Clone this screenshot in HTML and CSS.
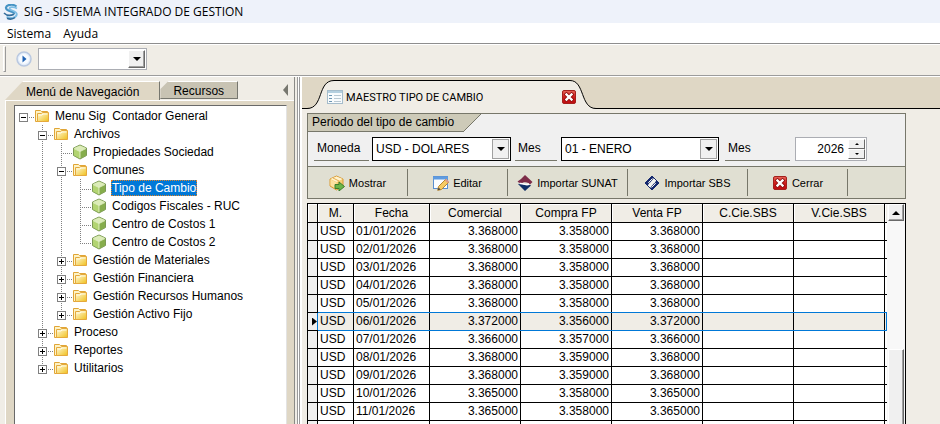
FILE: index.html
```html
<!DOCTYPE html>
<html lang="es">
<head>
    <meta charset="UTF-8">
    <meta name="viewport" content="width=device-width, initial-scale=1.0">
    <link rel="stylesheet" href="styles.css">
    <title>SIG - SISTEMA INTEGRADO DE GESTION</title>
</head>
<body>
    <!-- Shared icons -->
    <svg class="sprite" aria-hidden="true">
        <defs>
            <linearGradient id="gold" x1="0" y1="0" x2="1" y2="1">
                <stop offset="0" stop-color="#fffbe0"/>
                <stop offset="1" stop-color="#f0c01c"/>
            </linearGradient>
            <linearGradient id="red" x1="0" y1="0" x2="0" y2="1">
                <stop offset="0" stop-color="#e8685c"/>
                <stop offset="0.5" stop-color="#cf1f1c"/>
                <stop offset="1" stop-color="#c00c10"/>
            </linearGradient>
        </defs>
        <symbol id="folder" viewBox="0 0 16 16">
            <path d="M1.5 2.500h5l1 1h6v10h-12z" fill="#fdf3c6" stroke="#e0a536"/>
            <path d="M3.500 5.500h4l1-1h6v9h-11z" fill="url(#gold)" stroke="#e5a93c"/>
            <path d="M4.500 7h3.500l1-1h4.500" fill="none" stroke="#fffbe6"/>
        </symbol>
        <symbol id="cube" viewBox="0 0 16 16">
            <path d="M8 1l6.500 3v7.500L8 15l-6.500-3.500V4z" fill="#93bc55" stroke="#7c9a55"/>
            <path d="M8 1.500L14 4 8 7.500 2 4z" fill="#dcecb8"/>
            <path d="M2 4.500l6 3v7l-6-3.200z" fill="#b2d471"/>
            <path d="M14 4.500l-6 3v7l6-3.200z" fill="#86ad4c"/>
            <path d="M2 4.500l6 3 6-3M8 7.500V14" fill="none" stroke="#eef6d8" stroke-width="0.8"/>
        </symbol>
        <symbol id="close" viewBox="0 0 16 16">
            <rect x="1.500" y="1.500" width="13" height="13" rx="1.500" fill="url(#red)" stroke="#a3201c"/>
            <path d="M5.500 5.500l5 5M10.500 5.500l-5 5" stroke="#8d0c0c" stroke-width="4" stroke-linecap="square"/>
            <path d="M5.500 5.500l5 5M10.500 5.500l-5 5" stroke="#fff" stroke-width="2.400" stroke-linecap="square"/>
        </symbol>
    </svg>

    <header class="titlebar">
        <svg class="logo" viewBox="0 0 16 16">
            <path d="M13.500 2.500C10-.3 3.500.5 3 3.500c-.4 2.600 2.500 3.300 5 4 2 .6 3.500 1.300 3 2.500" fill="none" stroke="#4693c4" stroke-width="2.200"/>
            <path d="M14 4.500C10.500 2.500 6.500 3 6.500 4.800c.2 1.800 7.800 2 7.300 5.700C13.200 14 7 15 3.500 12.800" fill="none" stroke="#7dbde4" stroke-width="1.800"/>
            <path d="M1 9c2.500 2.500 6 3.200 10 1.200M4 14.300c3 1.200 6 .8 8-.8" fill="none" stroke="#336d9b" stroke-width="1.600"/>
        </svg>
        <span>SIG - SISTEMA INTEGRADO DE GESTION</span>
    </header>

    <nav class="menubar">
        <a href="#">Sistema</a>
        <a href="#">Ayuda</a>
    </nav>

    <div class="toolbar">
        <span class="grip"></span>
        <button type="button" class="go" aria-label="Ejecutar">
            <svg viewBox="0 0 16 16">
                <circle cx="8" cy="8" r="7" fill="#e4eefa" stroke="#b9c8e0" stroke-width="1.500"/>
                <circle cx="8" cy="8" r="5" fill="#f8fbff"/>
                <path d="M6.500 4.500L10.500 8l-4 3.500z" fill="#1f62b4"/>
            </svg>
        </button>
        <div class="combo quick">
            <select aria-label="Comando"><option></option></select>
            <span class="drop"></span>
        </div>
    </div>

    <div class="workspace">
        <aside class="sidebar">
            <div class="side-tabs">
                <button type="button" class="side-tab active"><span>Menú de Navegación</span></button>
                <button type="button" class="side-tab"><span>Recursos</span></button>
                <button type="button" class="collapse" aria-label="Ocultar panel"></button>
            </div>
            <div class="side-panel">
                <ul class="tree">
                    <li>
                        <div class="node"><button type="button" class="toggle open" aria-label="Contraer"></button><svg><use href="#folder"/></svg><a href="#">Menu Sig&nbsp; Contador General</a></div>
                        <ul>
                            <li>
                                <div class="node"><button type="button" class="toggle open" aria-label="Contraer"></button><svg><use href="#folder"/></svg><a href="#">Archivos</a></div>
                                <ul>
                                    <li><div class="node leaf"><svg><use href="#cube"/></svg><a href="#">Propiedades Sociedad</a></div></li>
                                    <li>
                                        <div class="node"><button type="button" class="toggle open" aria-label="Contraer"></button><svg><use href="#folder"/></svg><a href="#">Comunes</a></div>
                                        <ul>
                                            <li><div class="node leaf"><svg><use href="#cube"/></svg><a href="#" class="selected">Tipo de Cambio</a></div></li>
                                            <li><div class="node leaf"><svg><use href="#cube"/></svg><a href="#">Codigos Fiscales - RUC</a></div></li>
                                            <li><div class="node leaf"><svg><use href="#cube"/></svg><a href="#">Centro de Costos 1</a></div></li>
                                            <li><div class="node leaf"><svg><use href="#cube"/></svg><a href="#">Centro de Costos 2</a></div></li>
                                        </ul>
                                    </li>
                                    <li><div class="node"><button type="button" class="toggle" aria-label="Expandir"></button><svg><use href="#folder"/></svg><a href="#">Gestión de Materiales</a></div></li>
                                    <li><div class="node"><button type="button" class="toggle" aria-label="Expandir"></button><svg><use href="#folder"/></svg><a href="#">Gestión Financiera</a></div></li>
                                    <li><div class="node"><button type="button" class="toggle" aria-label="Expandir"></button><svg><use href="#folder"/></svg><a href="#">Gestión Recursos Humanos</a></div></li>
                                    <li><div class="node"><button type="button" class="toggle" aria-label="Expandir"></button><svg><use href="#folder"/></svg><a href="#">Gestión Activo Fijo</a></div></li>
                                </ul>
                            </li>
                            <li><div class="node"><button type="button" class="toggle" aria-label="Expandir"></button><svg><use href="#folder"/></svg><a href="#">Proceso</a></div></li>
                            <li><div class="node"><button type="button" class="toggle" aria-label="Expandir"></button><svg><use href="#folder"/></svg><a href="#">Reportes</a></div></li>
                            <li><div class="node"><button type="button" class="toggle" aria-label="Expandir"></button><svg><use href="#folder"/></svg><a href="#">Utilitarios</a></div></li>
                        </ul>
                    </li>
                </ul>
            </div>
        </aside>

        <div class="splitter"></div>

        <main class="document">
            <div class="doc-tabs">
                <svg class="edge" viewBox="0 0 32 29">
                    <path d="M0 28.500h5C22 28.500 15 .5 32 .5V29H0z" fill="#f0ede6"/>
                    <path d="M0 28.500h5C22 28.500 15 .5 32 .5" fill="none" stroke="#000"/>
                </svg>
                <div class="doc-tab">
                    <svg class="form-icon" viewBox="0 0 16 14">
                        <rect x="0.500" y="0.500" width="15" height="13" fill="#f8fbfd" stroke="#a5bccb"/>
                        <path d="M1 2h14" stroke="#b4cfdf" stroke-width="2"/>
                        <path d="M2 5.500h3M2 8.500h3M2 11.500h3" stroke="#6d96b3"/>
                        <path d="M7 5.500h7M7 8.500h7M7 11.500h7" stroke="#b9c8d2"/>
                    </svg>
                    <span>MAESTRO TIPO DE CAMBIO</span>
                    <button type="button" class="close" aria-label="Cerrar pestaña"><svg><use href="#close"/></svg></button>
                </div>
                <svg class="edge right" viewBox="0 0 26 29">
                    <path d="M0 .5C15 .5 10 28.500 26 28.500V29H0z" fill="#f0ede6"/>
                    <path d="M0 .5C15 .5 10 28.500 26 28.500" fill="none" stroke="#000"/>
                </svg>
            </div>

            <div class="doc-body">
                <form class="filter">
                    <h1>
                        <span>Periodo del tipo de cambio</span>
                        <svg viewBox="0 0 18 18">
                            <path d="M0 0h18L0 18z" fill="#cdcab8"/>
                            <path d="M18 0L0 18" stroke="#77776a"/>
                        </svg>
                    </h1>
                    <div class="fields">
                        <label class="moneda" for="moneda">Moneda</label>
                        <div class="combo currency">
                            <select id="moneda"><option>USD - DOLARES</option></select>
                            <span class="drop"></span>
                        </div>
                        <label class="mes" for="mes">Mes</label>
                        <div class="combo month">
                            <select id="mes"><option>01 - ENERO</option></select>
                            <span class="drop"></span>
                        </div>
                        <label class="anio" for="anio">Mes</label>
                        <div class="spinner">
                            <input type="number" id="anio" value="2026">
                            <div class="steps">
                                <button type="button" class="up" aria-label="Subir"></button>
                                <button type="button" class="down" aria-label="Bajar"></button>
                            </div>
                        </div>
                    </div>
                    <div class="actions">
                        <button type="button">
                            <svg viewBox="0 0 16 16">
                                <path d="M7.500 1l6.500 3v7l-6.500 4L1 11V4z" fill="#f5ce74" stroke="#d99a35"/>
                                <path d="M7.500 1.500L13.500 4l-6 3L1.500 4z" fill="#fff3cf"/>
                                <path d="M1.500 4.500l6 3v6.500l-6-3.500z" fill="#fbe1a0"/>
                                <path d="M4 3l6 3v3" fill="none" stroke="#e5ac4c"/>
                                <path d="M6 9.500h4V7l5.500 4.500L10 16v-2.500H6z" fill="#6cb548" stroke="#3c7f2b"/>
                            </svg>
                            <span>Mostrar</span>
                        </button>
                        <button type="button">
                            <svg viewBox="0 0 16 16">
                                <rect x="0.500" y="1.500" width="14" height="12" fill="#fcfdff" stroke="#5a8fd0"/>
                                <path d="M0 3h15" stroke="#5f9be0" stroke-width="3"/>
                                <path d="M5.500 11.500l7-7 3 3-7 7-3.800.8z" fill="#f7cb63" stroke="#b9862f"/>
                                <path d="M12.500 4.500l3 3" stroke="#e09a86" stroke-width="2"/>
                                <path d="M4.700 15.300l1-2.700 1.800 1.800z" fill="#444"/>
                            </svg>
                            <span>Editar</span>
                        </button>
                        <button type="button" class="wide">
                            <svg viewBox="0 0 16 16">
                                <path d="M8 0l7.500 7-2.500 2.500C12 7 6.500 6 3.500 9L.5 6.500 4 4z" fill="#7d2c48"/>
                                <path d="M8 16l6-5.500c-2-1.500-3 .5-6-.5-2-.7-3-2-7-1z" fill="#0f2f66"/>
                                <path d="M2.500 8.500c5-.5 5 2.500 9.500.5" fill="none" stroke="#fff" stroke-width="1.500"/>
                            </svg>
                            <span>Importar SUNAT</span>
                        </button>
                        <button type="button" class="wide">
                            <svg viewBox="0 0 16 16">
                                <path d="M8 1L15 8l-7 7-7-7z" fill="#f4f4f0" stroke="#15296e"/>
                                <path d="M8 1L1 8l2.500 2.500L10 3z" fill="#15296e"/>
                                <path d="M8 15l7-7-2.500-2.500L6 13z" fill="#15296e"/>
                                <path d="M8.500 3.500L4.500 7.500 7 9.500M7.500 12.500l4-4L9 6.500" fill="none" stroke="#f4f4f0"/>
                            </svg>
                            <span>Importar SBS</span>
                        </button>
                        <button type="button">
                            <svg><use href="#close"/></svg>
                            <span>Cerrar</span>
                        </button>
                    </div>
                </form>

                <div class="grid">
                    <table>
                        <colgroup>
                            <col class="c-mark"><col class="c-m"><col class="c-fecha">
                            <col class="c-num"><col class="c-num"><col class="c-num"><col class="c-num"><col class="c-num"><col>
                        </colgroup>
                        <thead>
                            <tr><th></th><th>M.</th><th>Fecha</th><th>Comercial</th><th>Compra FP</th><th>Venta FP</th><th>C.Cie.SBS</th><th>V.Cie.SBS</th><th></th></tr>
                        </thead>
                        <tbody>
                            <tr><td></td><td>USD</td><td>01/01/2026</td><td>3.368000</td><td>3.358000</td><td>3.368000</td><td></td><td></td><td></td></tr>
                            <tr><td></td><td>USD</td><td>02/01/2026</td><td>3.368000</td><td>3.358000</td><td>3.368000</td><td></td><td></td><td></td></tr>
                            <tr><td></td><td>USD</td><td>03/01/2026</td><td>3.368000</td><td>3.358000</td><td>3.368000</td><td></td><td></td><td></td></tr>
                            <tr><td></td><td>USD</td><td>04/01/2026</td><td>3.368000</td><td>3.358000</td><td>3.368000</td><td></td><td></td><td></td></tr>
                            <tr class="before-current"><td></td><td>USD</td><td>05/01/2026</td><td>3.368000</td><td>3.358000</td><td>3.368000</td><td></td><td></td><td></td></tr>
                            <tr class="current"><td><span class="marker"></span></td><td>USD</td><td>06/01/2026</td><td>3.372000</td><td>3.356000</td><td>3.372000</td><td></td><td></td><td></td></tr>
                            <tr><td></td><td>USD</td><td>07/01/2026</td><td>3.366000</td><td>3.357000</td><td>3.366000</td><td></td><td></td><td></td></tr>
                            <tr><td></td><td>USD</td><td>08/01/2026</td><td>3.368000</td><td>3.359000</td><td>3.368000</td><td></td><td></td><td></td></tr>
                            <tr><td></td><td>USD</td><td>09/01/2026</td><td>3.368000</td><td>3.359000</td><td>3.368000</td><td></td><td></td><td></td></tr>
                            <tr><td></td><td>USD</td><td>10/01/2026</td><td>3.365000</td><td>3.358000</td><td>3.365000</td><td></td><td></td><td></td></tr>
                            <tr><td></td><td>USD</td><td>11/01/2026</td><td>3.365000</td><td>3.358000</td><td>3.365000</td><td></td><td></td><td></td></tr>
                            <tr><td></td><td></td><td></td><td></td><td></td><td></td><td></td><td></td><td></td></tr>
                        </tbody>
                    </table>
                    <div class="scrollbar">
                        <button type="button" class="scroll-up" aria-label="Desplazar arriba"></button>
                        <div class="thumb"></div>
                    </div>
                </div>
            </div>
        </main>
    </div>
</body>
</html>
```
FILE: styles.css
```css
* {
    box-sizing: border-box;
}

body {
    margin: 0;
    height: 100vh;
    overflow: hidden;
    display: flex;
    flex-direction: column;
    background: #f0ede6;
    color: #000;
    font-family: "Liberation Sans", Arial, sans-serif;
    font-size: 12px;
}

button,
select,
input {
    font: inherit;
    color: inherit;
    margin: 0;
    padding: 0;
    border: 0;
    border-radius: 0;
    background: none;
}

a {
    color: inherit;
    text-decoration: none;
}

svg {
    display: block;
    flex: none;
    width: 16px;
    height: 16px;
}

.sprite {
    position: absolute;
    width: 0;
    height: 0;
}

/* Title, menu and toolbar */
.titlebar {
    flex: none;
    height: 23px;
    display: flex;
    align-items: center;
    gap: 5px;
    padding-left: 3px;
    background: #eef2fa;
    font-family: "Open Sans", "Noto Sans", sans-serif;
}

.menubar {
    flex: none;
    height: 21px;
    display: flex;
    align-items: center;
    gap: 12px;
    padding-left: 7px;
    background: #fff;
    border-bottom: 1px solid #8e8e8e;
    font-family: "Open Sans", "Noto Sans", sans-serif;
}

.toolbar {
    flex: none;
    height: 32px;
    display: flex;
    align-items: center;
    padding: 0 3px 3px;
    border-top: 1px solid #fff;
    border-bottom: 1px solid #9c9c9c;
}

.grip {
    width: 3px;
    height: 26px;
    border: 1px solid #fff;
    border-right-color: #9a9a9a;
    border-bottom-color: #9a9a9a;
}

.go {
    margin: 0 6px 0 10px;
}

/* Drop-down boxes */
.combo {
    display: flex;
    height: 24px;
    background: #fff;
    border: 1px solid #000;
}

.combo select {
    flex: 1;
    min-width: 0;
    padding-left: 3px;
    appearance: none;
    outline: none;
}

.drop {
    width: 17px;
    margin: 1px;
    display: flex;
    align-items: center;
    justify-content: center;
    background: #f0f0f0;
    border: 1px solid #a0a0a0;
}

.drop::after {
    content: "";
    border: 4px solid transparent;
    border-top-color: #000;
    border-bottom: 0;
}

.quick {
    width: 109px;
    height: 22px;
    border-color: #abadb3;
}

.quick .drop {
    border-color: #fff #696969 #696969 #fff;
    box-shadow: inset -1px -1px #a0a0a0;
}

.workspace {
    flex: 1;
    min-height: 0;
    display: flex;
    border-top: 1px solid #fff;
}

/* Navigation panel */
.sidebar {
    flex: none;
    width: 295px;
    display: flex;
    flex-direction: column;
    padding-top: 4px;
    border-right: 1px solid #8a8a86;
}

.side-tabs {
    display: flex;
    height: 19px;
    padding-left: 5px;
}

.side-tab {
    height: 18px;
    padding: 2px 13px 0 13px;
    background: #c8c3b3;
    clip-path: polygon(8px 0, 100% 0, 100% 100%, 0 100%, 0 8px);
    border-top: 1px solid #fff;
    border-right: 1px solid #77776f;
    border-bottom: 1px solid #77776f;
}

.side-tab.active {
    height: 19px;
    padding: 1px 20px 0 21px;
    background: #dfd7c5;
    clip-path: polygon(18px 0, 100% 0, 100% 100%, 0 100%);
    border-bottom: 0;
}

.collapse {
    margin: 3px 6px 0 auto;
    width: 5px;
    height: 12px;
    background: #77776f;
    clip-path: polygon(100% 0, 100% 100%, 0 50%);
}

.side-panel {
    flex: 1;
    min-height: 0;
    display: flex;
    margin-left: 5px;
    padding: 4px 7px 0 8px;
    background: #dfd7c5;
    border-top: 1px solid #fff;
    border-left: 1px solid #fff;
}

.tree {
    flex: 1;
    margin: 0;
    padding: 1px 0 0 4px;
    background: #fff;
    border: 1px solid #696969;
    border-right-color: #e3e3e3;
    border-bottom: 0;
    list-style: none;
    overflow: hidden;
}

.tree ul {
    margin: 0;
    padding: 0 0 0 19px;
    list-style: none;
}

/* vertical dotted guide */
.tree ul > li {
    background: repeating-linear-gradient(#808080 0 1px, transparent 1px 2px) 4px 0 / 1px 100% no-repeat;
}

.tree ul > li:last-child {
    background-size: 1px 10px;
}

/* horizontal dotted guide */
.node {
    display: flex;
    align-items: center;
    height: 18px;
    background: repeating-linear-gradient(90deg, #808080 0 1px, transparent 1px 2px) 4px 10px / 12px 1px no-repeat;
}

.node.leaf {
    padding-left: 15px;
}

.node.leaf a {
    margin-left: 4px;
}

.node a {
    margin-left: 4px;
    padding: 0 1px;
    line-height: 16px;
    white-space: nowrap;
}

.node a.selected {
    background: #0078d7;
    color: #fff;
    outline: 1px dotted #e08428;
    outline-offset: -1px;
}

.toggle {
    width: 9px;
    height: 9px;
    margin: 2px 6px 0 0;
    border: 1px solid #808080;
    background:
        linear-gradient(#000, #000) center / 5px 1px no-repeat,
        linear-gradient(#000, #000) center / 1px 5px no-repeat,
        #fff;
}

.toggle.open {
    background: linear-gradient(#000, #000) center / 5px 1px no-repeat, #fff;
}

.splitter {
    flex: none;
    width: 7px;
    border-right: 2px solid #fff;
    background: linear-gradient(90deg, transparent 2px, #9a9a9a 2px 3px, #fff 3px 4px, #9a9a9a 4px);
}

/* Document area */
.document {
    flex: 1;
    min-width: 0;
    display: flex;
    flex-direction: column;
}

.doc-tabs {
    flex: none;
    display: flex;
    height: 32px;
    padding-top: 3px;
    background: linear-gradient(#000, #000) bottom / 100% 1px no-repeat #dfd7c5;
}

.edge {
    width: 32px;
    height: 29px;
}

.edge.right {
    width: 26px;
}

.doc-tab {
    width: 236px;
    display: flex;
    align-items: center;
    gap: 3px;
    padding-top: 4px;
    background: #f0ede6;
    border-top: 1px solid #000;
    font-family: Roboto, "Liberation Sans", sans-serif;
    font-size: 11px;
    white-space: nowrap;
}

.doc-tab .form-icon {
    height: 14px;
    margin-left: -7px;
}

/* sits over the start of the tab's right curve */
.doc-tab .close {
    margin: 0 -7px 0 auto;
    z-index: 1;
}

.doc-body {
    flex: 1;
    min-height: 0;
    display: flex;
    flex-direction: column;
    gap: 4px;
    padding: 4px 34px 0 5px;
}

/* Filter box */
.filter {
    flex: none;
    border: 1px solid #77776a;
    background: #f0f0f0;
}

.filter h1 {
    display: flex;
    height: 18px;
    margin: 0;
    font-size: 12px;
    font-weight: normal;
    line-height: 17px;
}

.filter h1 span {
    width: 155px;
    padding-left: 4px;
    background: #cdcab8;
    border-bottom: 1px solid #77776a;
    white-space: nowrap;
}

.filter h1 svg {
    width: 18px;
    height: 18px;
}

.fields {
    display: flex;
    align-items: flex-start;
    padding: 5px 6px;
}

.fields label {
    height: 24px;
    margin-right: 3px;
    padding-left: 3px;
    border-bottom: 1px solid #77776a;
    line-height: 22px;
}

.moneda {
    width: 55px;
}

.mes {
    width: 42px;
}

.anio {
    width: 65px;
}

.currency {
    width: 139px;
    margin-right: 4px;
}

.month {
    width: 158px;
    margin: 0 6px 0 1px;
}

.spinner {
    display: flex;
    width: 72px;
    height: 24px;
    margin-left: 2px;
    padding: 1px;
    background: #fff;
    border: 1px solid #abadb3;
}

.spinner input {
    flex: 1;
    min-width: 0;
    padding-right: 4px;
    text-align: right;
    appearance: textfield;
    outline: none;
}

.spinner input::-webkit-inner-spin-button {
    appearance: none;
    margin: 0;
}

.steps {
    width: 17px;
    display: flex;
    flex-direction: column;
}

.steps button {
    flex: 1;
    display: flex;
    align-items: center;
    justify-content: center;
    background: #f0f0f0;
    border: 1px solid #fff;
    border-right-color: #696969;
    border-bottom-color: #696969;
}

.up::after,
.scroll-up::after {
    content: "";
    border: 2px solid transparent;
    border-top: 0;
    border-bottom-color: #000;
}

.down::after {
    content: "";
    border: 2px solid transparent;
    border-top-color: #000;
    border-bottom: 0;
}

.actions {
    display: flex;
    height: 32px;
    padding: 2px 0;
    background: #e0dfd2;
    border-top: 1px solid #77776a;
}

.actions button {
    width: 100px;
    display: flex;
    align-items: center;
    justify-content: center;
    gap: 4px;
    border-right: 1px solid #77776a;
    font-size: 11px;
    white-space: nowrap;
}

.actions button.wide {
    width: 120px;
}

/* Rates grid */
.grid {
    flex: 1;
    min-height: 0;
    display: flex;
    align-items: flex-start;
    overflow: hidden;
    border-right: 1px solid #000;
}

table {
    flex: 1;
    min-width: 0;
    border-collapse: collapse;
    table-layout: fixed;
    background: #fff;
}

.c-mark {
    width: 10px;
}

.c-m {
    width: 36px;
}

.c-fecha {
    width: 76px;
}

.c-num {
    width: 91px;
}

th,
td {
    height: 18px;
    padding: 0 2px;
    border: 1px solid #000;
    font-weight: normal;
    line-height: 17px;
}

th {
    height: 19px;
    background: #f0ede6;
    box-shadow: inset 1px 1px #fff;
}

td:first-child {
    padding: 0 0 0 4px;
    background: #f0f0f0;
}

td:nth-child(n + 4) {
    text-align: right;
}

th:last-child,
td:last-child {
    padding: 0;
    border-right: 0;
}

.before-current td:not(:first-child) {
    border-bottom-color: #0078d7;
}

.current td:not(:first-child) {
    background: #f0ede6;
    border-bottom-color: #0078d7;
}

.current td:last-child {
    border-right: 1px solid #0078d7;
}

.current td:first-child {
    border-right-color: #0078d7;
}

.marker {
    display: block;
    width: 5px;
    height: 8px;
    background: #000;
    clip-path: polygon(0 0, 100% 50%, 0 100%);
}

.scrollbar {
    align-self: stretch;
    width: 18px;
    display: flex;
    flex-direction: column;
    gap: 128px;
    padding: 0 1px;
    border-top: 1px solid #000;
    background: #f8f8f8;
}

.scroll-up {
    flex: none;
    height: 17px;
    display: flex;
    align-items: center;
    justify-content: center;
    background: #f0f0f0;
    border: 1px solid #fff;
    border-right-color: #696969;
    border-bottom-color: #696969;
    box-shadow: inset -1px -1px #a0a0a0;
}

.scroll-up::after {
    border-width: 0 4px 4px;
}

.thumb {
    flex: 1;
    background: #f0f0f0;
    border-top: 1px solid #fff;
    border-left: 1px solid #fff;
    border-right: 1px solid #696969;
    box-shadow: inset -1px 0 #a0a0a0;
}
```
